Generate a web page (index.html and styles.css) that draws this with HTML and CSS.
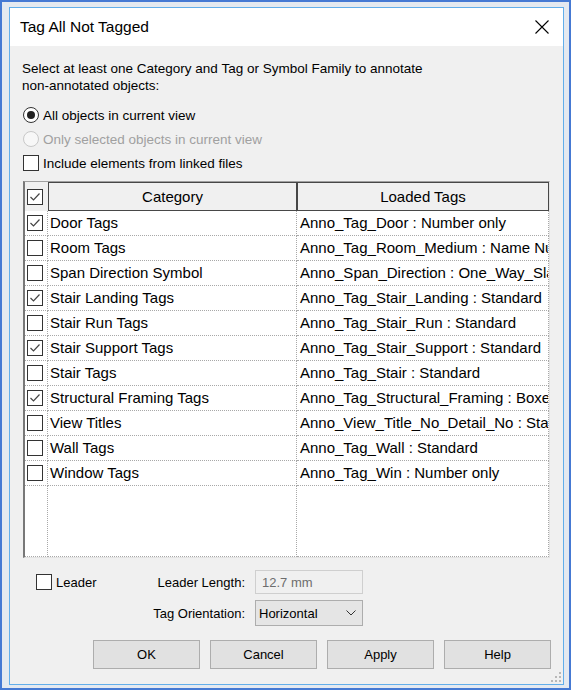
FILE: index.html
```html
<!DOCTYPE html>
<html lang="en">
<head>
    <meta charset="UTF-8">
    <title>Tag All Not Tagged</title>
    <link rel="stylesheet" href="styles.css">
</head>
<body>
<div class="screen">
    <div class="dialog">
        <div class="titlebar">
            <span class="title">Tag All Not Tagged</span>
            <svg class="close" width="14" height="14" viewBox="0 0 14 14"><path d="M0.5 0.5 L13.5 13.5 M13.5 0.5 L0.5 13.5" stroke="#000" stroke-width="1.1"/></svg>
        </div>

        <div class="content">
            <p class="intro">Select at least one Category and Tag or Symbol Family to annotate<br>non-annotated objects:</p>

            <label class="option first"><span class="radio checked"></span>All objects in current view</label>
            <label class="option disabled"><span class="radio"></span>Only selected objects in current view</label>
            <label class="option"><span class="check"></span>Include elements from linked files</label>

            <!-- Category / tag grid -->
            <div class="grid">
                <div class="row head">
                    <div class="cell-check"><span class="check on"></span></div>
                    <div class="cell-head">Category</div>
                    <div class="cell-head">Loaded Tags</div>
                </div>
                <div class="row">
                    <div class="cell-check"><span class="check on"></span></div>
                    <div class="cell-cat">Door Tags</div>
                    <div class="cell-tag">Anno_Tag_Door : Number only</div>
                </div>
                <div class="row">
                    <div class="cell-check"><span class="check"></span></div>
                    <div class="cell-cat">Room Tags</div>
                    <div class="cell-tag">Anno_Tag_Room_Medium : Name Number</div>
                </div>
                <div class="row">
                    <div class="cell-check"><span class="check"></span></div>
                    <div class="cell-cat">Span Direction Symbol</div>
                    <div class="cell-tag">Anno_Span_Direction : One_Way_Slab</div>
                </div>
                <div class="row">
                    <div class="cell-check"><span class="check on"></span></div>
                    <div class="cell-cat">Stair Landing Tags</div>
                    <div class="cell-tag">Anno_Tag_Stair_Landing : Standard</div>
                </div>
                <div class="row">
                    <div class="cell-check"><span class="check"></span></div>
                    <div class="cell-cat">Stair Run Tags</div>
                    <div class="cell-tag">Anno_Tag_Stair_Run : Standard</div>
                </div>
                <div class="row">
                    <div class="cell-check"><span class="check on"></span></div>
                    <div class="cell-cat">Stair Support Tags</div>
                    <div class="cell-tag">Anno_Tag_Stair_Support : Standard</div>
                </div>
                <div class="row">
                    <div class="cell-check"><span class="check"></span></div>
                    <div class="cell-cat">Stair Tags</div>
                    <div class="cell-tag">Anno_Tag_Stair : Standard</div>
                </div>
                <div class="row">
                    <div class="cell-check"><span class="check on"></span></div>
                    <div class="cell-cat">Structural Framing Tags</div>
                    <div class="cell-tag">Anno_Tag_Structural_Framing : Boxed</div>
                </div>
                <div class="row">
                    <div class="cell-check"><span class="check"></span></div>
                    <div class="cell-cat">View Titles</div>
                    <div class="cell-tag">Anno_View_Title_No_Detail_No : Standard</div>
                </div>
                <div class="row">
                    <div class="cell-check"><span class="check"></span></div>
                    <div class="cell-cat">Wall Tags</div>
                    <div class="cell-tag">Anno_Tag_Wall : Standard</div>
                </div>
                <div class="row">
                    <div class="cell-check"><span class="check"></span></div>
                    <div class="cell-cat">Window Tags</div>
                    <div class="cell-tag">Anno_Tag_Win : Number only</div>
                </div>
                <div class="row filler">
                    <div></div>
                    <div></div>
                    <div></div>
                </div>
            </div>

            <!-- Leader options -->
            <div class="opts">
                <label class="leader"><span class="check"></span>Leader</label>
                <span class="opt-label">Leader Length:</span>
                <div class="field disabled">12.7 mm</div>
                <span></span>
                <span class="opt-label">Tag Orientation:</span>
                <div class="field select">
                    <span>Horizontal</span>
                    <svg width="10" height="6" viewBox="0 0 10 6"><path d="M0.5 0.5 L5 5 L9.5 0.5" fill="none" stroke="#333" stroke-width="1"/></svg>
                </div>
            </div>

            <div class="buttons">
                <button>OK</button>
                <button>Cancel</button>
                <button>Apply</button>
                <button>Help</button>
            </div>
        </div>

        <svg class="grip" width="12" height="12" viewBox="0 0 12 12">
            <rect x="9" y="1" width="2" height="2" fill="#b8b8b8"/>
            <rect x="5" y="5" width="2" height="2" fill="#b8b8b8"/>
            <rect x="9" y="5" width="2" height="2" fill="#b8b8b8"/>
            <rect x="1" y="9" width="2" height="2" fill="#b8b8b8"/>
            <rect x="5" y="9" width="2" height="2" fill="#b8b8b8"/>
            <rect x="9" y="9" width="2" height="2" fill="#b8b8b8"/>
        </svg>
    </div>
</div>
</body>
</html>
```

FILE: styles.css
```css
body {
    margin: 0;
    font-family: "Liberation Sans", Arial, sans-serif;
    font-size: 13px;
    color: #000;
}
.screen {
    width: 571px;
    height: 690px;
    box-sizing: border-box;
    border: 2px solid #4579d3;
    background: #e4e9f0;
    padding: 5px 5px 3px 7px;
    display: flex;
}
.dialog {
    position: relative;
    width: 555px;
    height: 678px;
    box-sizing: border-box;
    border: 1px solid #62aeea;
    background: #f0f0f0;
    display: flex;
    flex-direction: column;
}
.titlebar {
    height: 38px;
    background: #fff;
    display: flex;
    align-items: center;
    justify-content: space-between;
    padding: 0 14px 0 10px;
}
.title {
    font-size: 15.5px;
}
.content {
    flex: 1;
    padding: 0 13px;
    display: flex;
    flex-direction: column;
}
.intro {
    margin: 14px 0 0 -1px;
    line-height: 17px;
    font-size: 13.5px;
}
.option {
    display: flex;
    align-items: center;
    gap: 4px;
    height: 24px;
    font-size: 13.5px;
}
.option.first {
    margin-top: 9px;
}
.option.disabled {
    color: #a0a0a0;
}
.radio {
    width: 16px;
    height: 16px;
    box-sizing: border-box;
    border: 1px solid #333;
    border-radius: 50%;
    background: #fff;
    display: flex;
    align-items: center;
    justify-content: center;
}
.radio.checked::after {
    content: "";
    width: 8px;
    height: 8px;
    border-radius: 50%;
    background: #222;
}
.option.disabled .radio {
    border-color: #c8c8c8;
    background: #f7f7f7;
}
.check {
    width: 16px;
    height: 16px;
    box-sizing: border-box;
    border: 1px solid #333;
    background: #fff;
    flex-shrink: 0;
}
.check.on {
    background: #fff url("data:image/svg+xml;utf8,<svg xmlns='http://www.w3.org/2000/svg' width='14' height='14' viewBox='0 0 14 14'><path d='M2.5 7 L5.5 10 L11.5 3.5' fill='none' stroke='%23444' stroke-width='1.2'/></svg>") no-repeat center;
}
.grid {
    margin-top: 6px;
    width: 527px;
    height: 377px;
    box-sizing: border-box;
    border-top: 1px solid #a0a0a0;
    border-left: 2px solid #787878;
    border-right: 1px solid #e3e3e3;
    border-bottom: 1px solid #e3e3e3;
    background: #fff;
    display: flex;
    flex-direction: column;
}
.row {
    display: grid;
    grid-template-columns: 23px 249px 252px;
    height: 25px;
    font-size: 15px;
}
.row > div {
    box-sizing: border-box;
    border-right: 1px dotted #a8a8a8;
    border-bottom: 1px dotted #a8a8a8;
    overflow: hidden;
    white-space: nowrap;
    line-height: 24px;
}
.row .cell-check {
    display: flex;
    align-items: center;
    padding-left: 2px;
}
.cell-cat {
    padding-left: 2px;
}
.cell-tag {
    padding-left: 3px;
}
.row.head {
    height: 29px;
    background: #f0f0f0;
}
.row.head > div {
    border: none;
}
.row.head > .cell-head {
    border: 1px solid #474747;
    line-height: 27px;
    text-align: center;
}
.row.filler {
    flex: 1;
}
.opts {
    margin: 12px 0 0 13px;
    display: grid;
    grid-template-columns: 100px 99px 108px;
    grid-template-rows: 24px 26px;
    column-gap: 10px;
    row-gap: 6px;
    align-items: center;
}
.leader {
    display: flex;
    align-items: center;
    gap: 4px;
}
.opt-label {
    text-align: right;
}
.field {
    height: 100%;
    box-sizing: border-box;
    display: flex;
    align-items: center;
}
.field.disabled {
    border: 1px solid #cfcfcf;
    color: #6d6d6d;
    padding-left: 6px;
}
.field.select {
    border: 1px solid #adadad;
    background: #e5e5e5;
    justify-content: space-between;
    padding: 0 6px 0 3px;
}
.buttons {
    margin: 14px -1px 0 0;
    display: flex;
    justify-content: flex-end;
    gap: 10px;
}
.buttons button {
    width: 107px;
    height: 29px;
    font: inherit;
    background: #e1e1e1;
    border: 1px solid #adadad;
    color: #000;
}
.grip {
    position: absolute;
    right: 1px;
    bottom: 1px;
}
```
